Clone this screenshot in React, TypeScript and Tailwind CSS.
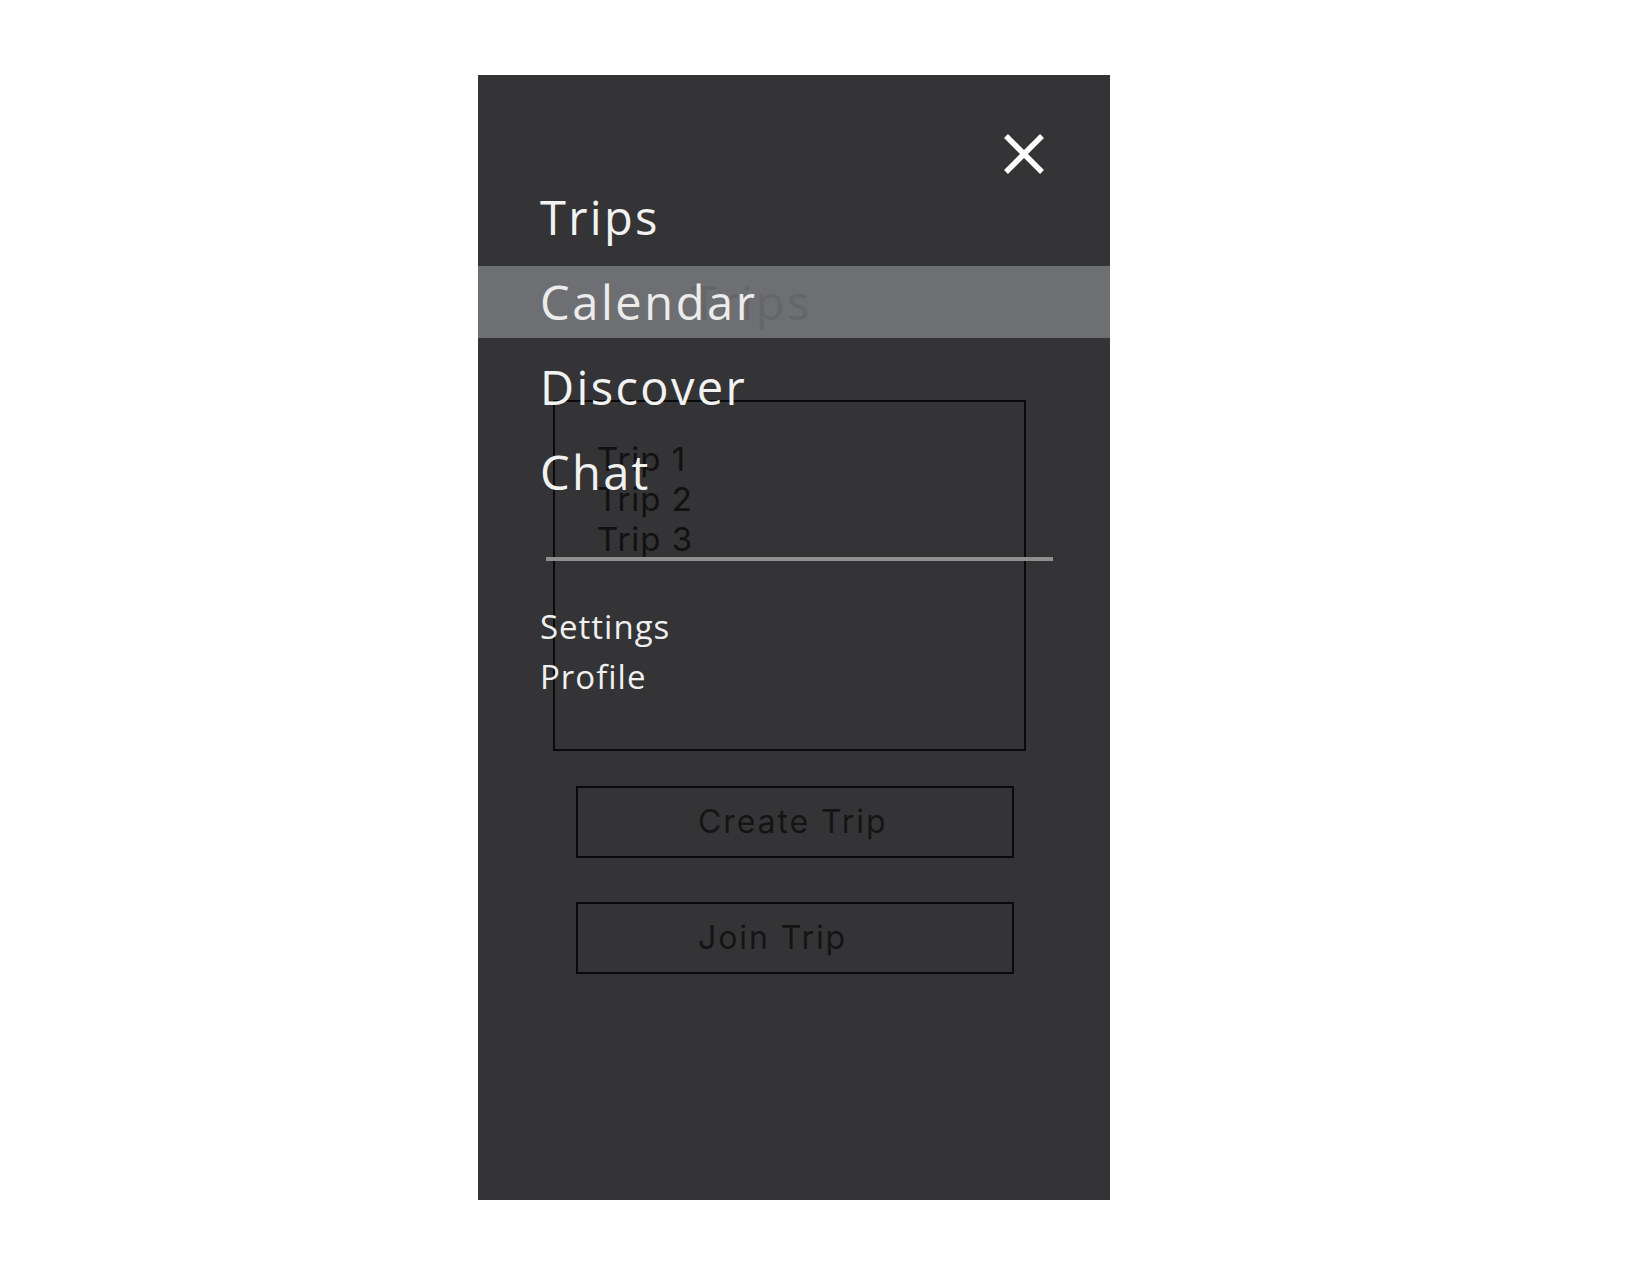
import React from "react";

const menuFont = { fontFamily: '"Open Sans", "Noto Sans", sans-serif' };
const tripFont = { fontFamily: 'Inter, "Liberation Sans", sans-serif' };

const trips = ["Trip 1", "Trip 2", "Trip 3"];
const mainLinks = ["Trips", "Calendar", "Discover", "Chat"];

const CloseIcon: React.FC = () => (
  <svg width="42" height="42" viewBox="0 0 42 42" fill="none">
    <path
      d="M3 3 L39 39 M39 3 L3 39"
      stroke="#ffffff"
      strokeWidth="5.5"
      strokeLinecap="butt"
    />
  </svg>
);

const App: React.FC = () => {
  return (
    <div className="min-h-screen bg-white">
      <div className="relative ml-[478px] pt-[75px]">
        <div className="relative w-[632px] h-[1125px] bg-[#343436] overflow-hidden">
          {/* page behind the drawer */}
          <div className="flex flex-col pt-[325px]" style={tripFont}>
            <div className="ml-[75px] w-[473px] h-[351px] border-2 border-[#0a0a0a] pl-[42px] pt-[37px]">
              {trips.map((t) => (
                <div key={t} className="text-[33px] leading-[40px] text-[#111111] tracking-[0.03em]">
                  {t}
                </div>
              ))}
            </div>
            <button className="ml-[98px] mt-[35px] w-[438px] h-[72px] border-2 border-[#0a0a0a] text-left pl-[120px] text-[32px] text-[#141414] tracking-[0.06em]">
              Create Trip
            </button>
            <button className="ml-[98px] mt-[44px] w-[438px] h-[72px] border-2 border-[#0a0a0a] text-left pl-[120px] text-[32px] text-[#141414] tracking-[0.06em]">
              Join Trip
            </button>
          </div>

          {/* drawer menu */}
          <div className="absolute inset-0 flex flex-col" style={menuFont}>
            <div className="absolute top-[58px] left-[525px]">
              <CloseIcon />
            </div>
            <nav className="flex flex-col gap-[13px] pt-[106px]">
              {mainLinks.map((l) => (
                <div
                  key={l}
                  className={
                    l === "Calendar"
                      ? "relative h-[72px] bg-[#6e6f72] pl-[62px] text-[47px] leading-[72px] text-[#ececec] tracking-[0.055em]"
                      : "relative h-[72px] pl-[62px] text-[47px] leading-[72px] text-[#f2f2f2] tracking-[0.05em]"
                  }
                >
                  {l === "Calendar" && (
                    <span className="absolute left-[213px] top-0 text-[#656669]">Trips</span>
                  )}
                  <span className="relative">{l}</span>
                </div>
              ))}
            </nav>
            <div className="ml-[68px] mt-[49px] w-[507px] h-[4px] bg-[#8f8f8f]" />
            <div className="flex flex-col pt-[41px] pl-[62px] text-[33px] leading-[50px] text-[#f0f0f0] tracking-[0.03em]">
              <span>Settings</span>
              <span>Profile</span>
            </div>
          </div>
        </div>
      </div>
    </div>
  );
};

export default App;
